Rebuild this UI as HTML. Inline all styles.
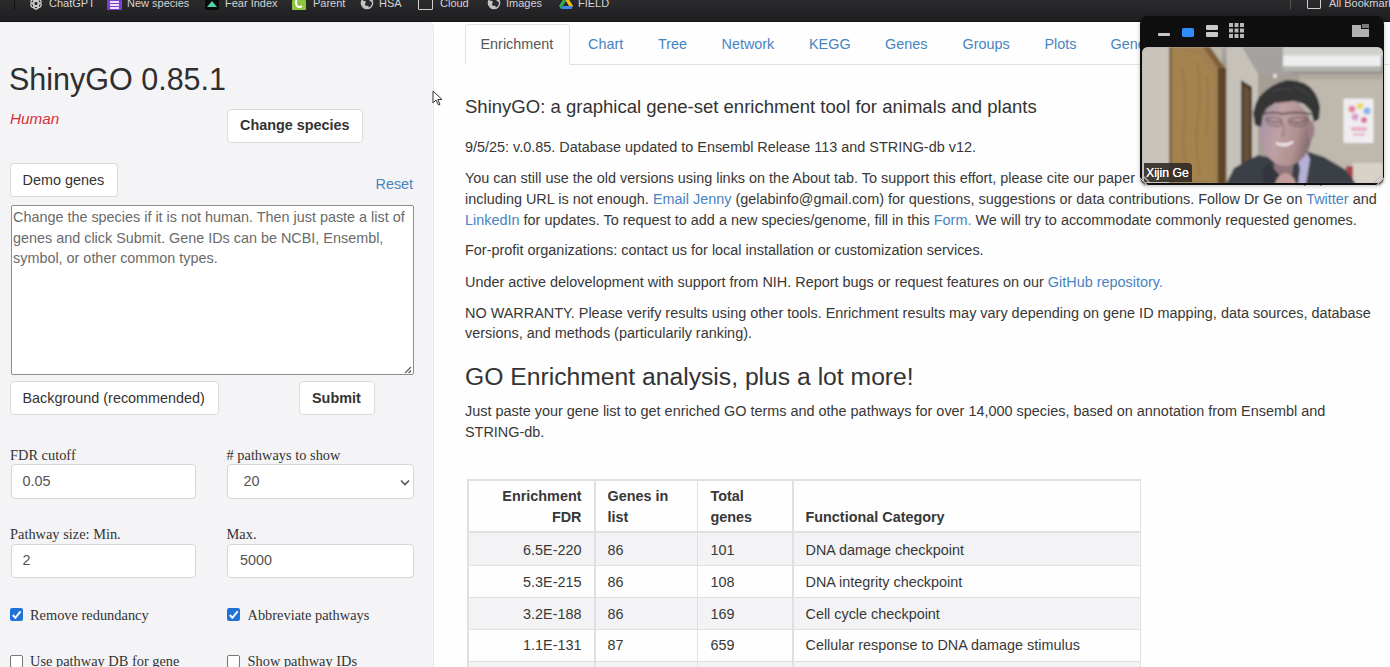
<!DOCTYPE html>
<html><head><meta charset="utf-8">
<style>
*{box-sizing:border-box;margin:0;padding:0}
html,body{width:1390px;height:667px;overflow:hidden;background:#fefefe;font-family:"Liberation Sans",sans-serif;color:#333;position:relative}
.a{position:absolute;white-space:nowrap}
#top{position:absolute;left:0;top:0;width:1390px;height:22px;background:linear-gradient(#2b2a2c,#1e1d1f);border-bottom:1px solid #121113}
#top .t{position:absolute;white-space:nowrap;top:-4px;font-size:11px;line-height:14px;color:#d4d4d4}
#side{position:absolute;left:-12px;top:22px;width:446px;height:700px;background:#f4f4f6;border:1px solid #e9e9ec;border-top-color:#f0f0f2;border-radius:5px}
.btn{position:absolute;background:#fff;border:1px solid #dcdcdc;border-radius:4px}
.inp{position:absolute;background:#fff;border:1px solid #d6d6d6;border-radius:4px}
.lbl{font-family:"Liberation Serif",serif;font-size:14.4px;color:#333;line-height:18px}
.s14{font-size:14.4px;line-height:18px}
.lnk{color:#4884c0}
.tab{position:absolute;top:0;font-size:14.4px;line-height:18px;color:#4884c0}
.line{position:absolute;left:465px;font-size:14.43px;line-height:18px;white-space:nowrap;color:#383838}
.cb{position:absolute;width:13px;height:13px;border-radius:2px}
.cell{position:absolute;font-size:14.4px;line-height:18px;white-space:nowrap;color:#383838}
.hl{position:absolute;background:#e0e0e2}
</style></head><body>

<!-- top bookmarks bar -->
<div id="top">
  <div class="a" style="left:14px;top:0;width:1px;height:10px;background:#111"></div>
  <svg class="a" style="left:29px;top:-2px" width="14" height="13" viewBox="0 0 14 13"><g fill="none" stroke="#d0d0d0" stroke-width="1.3" transform="translate(7 5.5)"><rect x="-2.2" y="-5.5" width="4.4" height="11" rx="2.2"/><rect x="-2.2" y="-5.5" width="4.4" height="11" rx="2.2" transform="rotate(60)"/><rect x="-2.2" y="-5.5" width="4.4" height="11" rx="2.2" transform="rotate(120)"/></g></svg>
  <div class="t" style="left:49px">ChatGPT</div>
  <div class="a" style="left:107px;top:0;width:15px;height:10px;background:#7b3fd6;border-radius:1px"></div>
  <div class="a" style="left:110px;top:1px;width:9px;height:1.5px;background:#e9defc;box-shadow:0 3px 0 #e9defc,0 6px 0 #e9defc"></div>
  <div class="t" style="left:127px">New species</div>
  <div class="a" style="left:205px;top:0;width:14px;height:10px;background:#0b0b0b"></div>
  <svg class="a" style="left:206px;top:0" width="12" height="9"><polygon points="6,1 11,7 1,7" fill="#4fd6a4"/></svg>
  <div class="t" style="left:225px">Fear Index</div>
  <div class="a" style="left:292px;top:0;width:14px;height:10px;background:#8cc63f;border-radius:1px"></div>
  <div class="a" style="left:295px;top:-3px;width:9px;height:11px;border:2px solid #fff;border-right-color:transparent;border-radius:50%"></div>
  <div class="t" style="left:313px">Parent</div>
  <svg class="a" style="left:360px;top:-3px" width="14" height="13"><circle cx="7" cy="6" r="5.6" fill="#2a2a2a" stroke="#c4c4c4" stroke-width="1.4"/><path d="M2 4 Q5 3 6 5 Q4 7 6 9 Q8 8 9 10 L8 12 Q3 11 1.5 7 Z M8 1 Q9 4 12 5 L12.5 3 Q11 1 8 0.5 Z" fill="#c4c4c4"/></svg>
  <div class="t" style="left:379px">HSA</div>
  <div class="a" style="left:418px;top:-2px;width:15px;height:12px;border:1.5px solid #cfcfcf;border-radius:1px"></div>
  <div class="t" style="left:440px">Cloud</div>
  <svg class="a" style="left:487px;top:-3px" width="14" height="13"><circle cx="7" cy="6" r="5.6" fill="#2a2a2a" stroke="#c4c4c4" stroke-width="1.4"/><path d="M2 4 Q5 3 6 5 Q4 7 6 9 Q8 8 9 10 L8 12 Q3 11 1.5 7 Z M8 1 Q9 4 12 5 L12.5 3 Q11 1 8 0.5 Z" fill="#c4c4c4"/></svg>
  <div class="t" style="left:506px">Images</div>
  <svg class="a" style="left:559px;top:-2px" width="14" height="12"><polygon points="5,0 9,0 14,8 12,11" fill="#fbbc04"/><polygon points="5,0 0,8 2,11 7,3" fill="#34a853"/><polygon points="2,11 12,11 14,8 4,8" fill="#4285f4"/></svg>
  <div class="t" style="left:578px">FIELD</div>
  <div class="a" style="left:1290px;top:0;width:1px;height:9px;background:#555"></div>
  <div class="a" style="left:1307px;top:-3px;width:14px;height:12px;border:1.5px solid #cfcfcf;border-radius:1px"></div>
  <div class="t" style="left:1329px">All Bookmarks</div>
</div>

<!-- sidebar -->
<div id="side"></div>
<div class="a" style="left:9px;top:61px;font-size:30.5px;line-height:36px;color:#2f2f2f">ShinyGO 0.85.1</div>
<div class="a" style="left:10px;top:110px;font-size:15.3px;line-height:18px;color:#d8303b;font-style:italic">Human</div>
<div class="btn" style="left:227px;top:108.5px;width:136px;height:34px"></div>
<div class="a" style="left:240px;top:116px;font-size:14.4px;line-height:18px;font-weight:bold;color:#333">Change species</div>
<div class="btn" style="left:10px;top:163px;width:108px;height:34px"></div>
<div class="a s14" style="left:22.5px;top:171px">Demo genes</div>
<div class="a s14 lnk" style="left:375.5px;top:174.5px">Reset</div>
<div class="a" style="left:10.5px;top:204.5px;width:403px;height:170px;background:#fff;border:1px solid #8e8e8e;border-radius:2px"></div>
<div class="a" style="left:13px;top:207px;font-size:14.4px;line-height:20.6px;color:#6a6a6a;white-space:normal;width:400px">Change the species if it is not human. Then just paste a list of<br>genes and click Submit. Gene IDs can be NCBI, Ensembl,<br>symbol, or other common types.</div>
<svg class="a" style="left:404px;top:366px" width="8" height="8"><path d="M7 1 L1 7 M7 4.5 L4.5 7" stroke="#666" stroke-width="1.4"/></svg>
<div class="btn" style="left:10px;top:380.5px;width:209px;height:34.5px"></div>
<div class="a s14" style="left:22.5px;top:389px">Background (recommended)</div>
<div class="btn" style="left:299px;top:380.5px;width:76px;height:34.5px"></div>
<div class="a" style="left:312px;top:389px;font-size:14.4px;line-height:18px;font-weight:bold;color:#333">Submit</div>

<div class="a lbl" style="left:10px;top:446px">FDR cutoff</div>
<div class="inp" style="left:10.5px;top:464px;width:185px;height:35px"></div>
<div class="a s14" style="left:22.5px;top:472px;color:#555">0.05</div>
<div class="a lbl" style="left:226.5px;top:446px"># pathways to show</div>
<div class="inp" style="left:227px;top:464px;width:186.5px;height:35px"></div>
<div class="a s14" style="left:243.5px;top:472px;color:#555">20</div>
<svg class="a" style="left:400px;top:478.7px" width="10" height="7"><path d="M1 1.5 L5 5.5 L9 1.5" stroke="#555" stroke-width="1.6" fill="none"/></svg>

<div class="a lbl" style="left:10px;top:525px">Pathway size: Min.</div>
<div class="inp" style="left:10.5px;top:544px;width:185px;height:34px"></div>
<div class="a s14" style="left:22.5px;top:551px;color:#555">2</div>
<div class="a lbl" style="left:226.5px;top:525px">Max.</div>
<div class="inp" style="left:227px;top:544px;width:186.5px;height:34px"></div>
<div class="a s14" style="left:240px;top:551px;color:#555">5000</div>

<div class="cb" style="left:10px;top:608px;background:#1f73d8"></div>
<svg class="a" style="left:10px;top:608px" width="13" height="13"><path d="M2.8 7 L5.4 9.8 L10.6 3.3" stroke="#fff" stroke-width="2" fill="none"/></svg>
<div class="a lbl" style="left:30px;top:606px">Remove redundancy</div>
<div class="cb" style="left:226.5px;top:608px;background:#1f73d8"></div>
<svg class="a" style="left:226.5px;top:608px" width="13" height="13"><path d="M2.8 7 L5.4 9.8 L10.6 3.3" stroke="#fff" stroke-width="2" fill="none"/></svg>
<div class="a lbl" style="left:247.5px;top:606px">Abbreviate pathways</div>
<div class="cb" style="left:10px;top:654.5px;background:#fff;border:1px solid #777"></div>
<div class="a lbl" style="left:30px;top:652px">Use pathway DB for gene</div>
<div class="cb" style="left:226.5px;top:654.5px;background:#fff;border:1px solid #777"></div>
<div class="a lbl" style="left:247.5px;top:652px">Show pathway IDs</div>

<!-- mouse cursor -->
<svg class="a" style="left:432px;top:90px" width="11" height="17"><path d="M1 1 L1 13 L4 10 L6.5 15 L8 14.3 L5.8 9.5 L10 9.5 Z" fill="#fff" stroke="#333" stroke-width="1"/></svg>

<!-- tabs -->
<div class="a" style="left:464.5px;top:64px;width:930px;height:1px;background:#e2e2e2"></div>
<div class="a" style="left:464.5px;top:23.5px;width:105px;height:41.5px;background:#fefefe;border:1px solid #e2e2e2;border-bottom-color:#fefefe;border-radius:4px 4px 0 0"></div>
<div class="tab" style="left:480.5px;top:35px;color:#555">Enrichment</div>
<div class="tab" style="left:588px;top:35px">Chart</div>
<div class="tab" style="left:658px;top:35px">Tree</div>
<div class="tab" style="left:721.5px;top:35px">Network</div>
<div class="tab" style="left:809px;top:35px">KEGG</div>
<div class="tab" style="left:885px;top:35px">Genes</div>
<div class="tab" style="left:962.5px;top:35px">Groups</div>
<div class="tab" style="left:1044.5px;top:35px">Plots</div>
<div class="tab" style="left:1110.5px;top:35px">Genes</div>

<!-- main text -->
<div class="a" style="left:465px;top:96px;font-size:18.55px;line-height:22px;color:#333">ShinyGO: a graphical gene-set enrichment tool for animals and plants</div>
<div class="line" style="top:138px">9/5/25: v.0.85. Database updated to Ensembl Release 113 and STRING-db v12.</div>
<div class="line" style="top:169px">You can still use the old versions using links on the About tab. To support this effort, please cite our paper <span class="lnk" style="padding-left:14px">in Bioinformatics, 2020 paper</span></div>
<div class="line" style="top:190px">including URL is not enough. <span class="lnk">Email Jenny</span> (gelabinfo@gmail.com) for questions, suggestions or data contributions. Follow Dr Ge on <span class="lnk">Twitter</span> and</div>
<div class="line" style="top:210.5px"><span class="lnk">LinkedIn</span> for updates. To request to add a new species/genome, fill in this <span class="lnk">Form.</span> We will try to accommodate commonly requested genomes.</div>
<div class="line" style="top:241px">For-profit organizations: contact us for local installation or customization services.</div>
<div class="line" style="top:272.5px">Under active delovelopment with support from NIH. Report bugs or request features on our <span class="lnk">GitHub repository.</span></div>
<div class="line" style="top:303.5px">NO WARRANTY. Please verify results using other tools. Enrichment results may vary depending on gene ID mapping, data sources, database</div>
<div class="line" style="top:324px">versions, and methods (particularily ranking).</div>
<div class="a" style="left:465px;top:363px;font-size:24.7px;line-height:28px;color:#333">GO Enrichment analysis, plus a lot more!</div>
<div class="line" style="top:402px">Just paste your gene list to get enriched GO terms and othe pathways for over 14,000 species, based on annotation from Ensembl and</div>
<div class="line" style="top:422.8px">STRING-db.</div>

<!-- table -->
<div class="a" style="left:467.5px;top:532px;width:673px;height:33px;background:#f3f3f5"></div>
<div class="a" style="left:467.5px;top:597.5px;width:673px;height:32px;background:#f3f3f5"></div>
<div class="a" style="left:467.5px;top:662px;width:673px;height:10px;background:#f3f3f5"></div>
<div class="hl" style="left:467.5px;top:479px;width:673px;height:1.5px"></div>
<div class="hl" style="left:467.5px;top:531px;width:673px;height:2px"></div>
<div class="hl" style="left:467.5px;top:564.5px;width:673px;height:1px"></div>
<div class="hl" style="left:467.5px;top:597px;width:673px;height:1px"></div>
<div class="hl" style="left:467.5px;top:629px;width:673px;height:1px"></div>
<div class="hl" style="left:467.5px;top:661px;width:673px;height:1px"></div>
<div class="hl" style="left:467px;top:479px;width:1.5px;height:200px"></div>
<div class="hl" style="left:594px;top:479px;width:1.5px;height:200px"></div>
<div class="hl" style="left:696.5px;top:479px;width:1.5px;height:200px"></div>
<div class="hl" style="left:792px;top:479px;width:1.5px;height:200px"></div>
<div class="hl" style="left:1139.5px;top:479px;width:1.5px;height:200px"></div>

<div class="cell" style="left:467.5px;width:114px;text-align:right;top:487px;font-weight:bold">Enrichment</div>
<div class="cell" style="left:467.5px;width:114px;text-align:right;top:507.5px;font-weight:bold">FDR</div>
<div class="cell" style="left:607.5px;top:487px;font-weight:bold">Genes in</div>
<div class="cell" style="left:607.5px;top:507.5px;font-weight:bold">list</div>
<div class="cell" style="left:710.5px;top:487px;font-weight:bold">Total</div>
<div class="cell" style="left:710.5px;top:507.5px;font-weight:bold">genes</div>
<div class="cell" style="left:805.5px;top:507.5px;font-weight:bold">Functional Category</div>

<div class="cell" style="left:467.5px;width:114px;text-align:right;top:540.5px">6.5E-220</div>
<div class="cell" style="left:607.5px;top:540.5px">86</div>
<div class="cell" style="left:710.5px;top:540.5px">101</div>
<div class="cell" style="left:805.5px;top:540.5px">DNA damage checkpoint</div>
<div class="cell" style="left:467.5px;width:114px;text-align:right;top:572.5px">5.3E-215</div>
<div class="cell" style="left:607.5px;top:572.5px">86</div>
<div class="cell" style="left:710.5px;top:572.5px">108</div>
<div class="cell" style="left:805.5px;top:572.5px">DNA integrity checkpoint</div>
<div class="cell" style="left:467.5px;width:114px;text-align:right;top:604.5px">3.2E-188</div>
<div class="cell" style="left:607.5px;top:604.5px">86</div>
<div class="cell" style="left:710.5px;top:604.5px">169</div>
<div class="cell" style="left:805.5px;top:604.5px">Cell cycle checkpoint</div>
<div class="cell" style="left:467.5px;width:114px;text-align:right;top:636px">1.1E-131</div>
<div class="cell" style="left:607.5px;top:636px">87</div>
<div class="cell" style="left:710.5px;top:636px">659</div>
<div class="cell" style="left:805.5px;top:636px">Cellular response to DNA damage stimulus</div>

<!-- zoom overlay -->
<div id="zoom" class="a" style="left:1140px;top:15.5px;width:243.5px;height:169px;background:#0f0f10;border-radius:8px;box-shadow:0 1px 4px rgba(0,0,0,.25)">
 <div class="a" style="left:17.5px;top:17.5px;width:12px;height:3px;background:#c8c8c8;border-radius:1px"></div>
 <div class="a" style="left:41.5px;top:12.5px;width:12.5px;height:8.5px;background:#2d8cff;border-radius:1.5px"></div>
 <div class="a" style="left:65.5px;top:9px;width:12px;height:5px;background:#c8c8c8;border-radius:1px"></div>
 <div class="a" style="left:65.5px;top:16px;width:12px;height:5px;background:#c8c8c8;border-radius:1px"></div>
 <svg class="a" style="left:88.5px;top:7.5px" width="15" height="15"><g fill="#b8b8b8"><rect x="0" y="0" width="4" height="4"/><rect x="5.5" y="0" width="4" height="4"/><rect x="11" y="0" width="4" height="4"/><rect x="0" y="5.5" width="4" height="4"/><rect x="5.5" y="5.5" width="4" height="4"/><rect x="11" y="5.5" width="4" height="4"/><rect x="0" y="11" width="4" height="4"/><rect x="5.5" y="11" width="4" height="4"/><rect x="11" y="11" width="4" height="4"/></g></svg>
 <svg class="a" style="left:211.5px;top:8.5px" width="17" height="13"><path d="M0 1 H9 V5 H17 V13 H0 Z" fill="#b0b0b0"/><rect x="10" y="0" width="7" height="4" fill="#7a7a7a"/></svg>
 <div class="a" style="left:1.5px;top:31px;width:241px;height:136.5px;border-radius:6px;overflow:hidden;background:#b7b1a8">
  <svg width="241" height="137" viewBox="0 0 241 137">
   <defs><filter id="bl"><feGaussianBlur stdDeviation="0.8"/></filter>
   <linearGradient id="ceil" x1="0" y1="0" x2="0" y2="1"><stop offset="0" stop-color="#a9a7a5"/><stop offset="1" stop-color="#8f8c88"/></linearGradient>
   <linearGradient id="face" x1="0" y1="0" x2="1" y2="0.3"><stop offset="0" stop-color="#a290a6"/><stop offset="0.45" stop-color="#bfa0a4"/><stop offset="0.8" stop-color="#b09090"/><stop offset="1" stop-color="#8a7276"/></linearGradient>
   </defs>
   <g filter="url(#bl)">
   <rect x="0" y="0" width="241" height="137" fill="#bdb6ab"/>
   <rect x="80" y="0" width="161" height="30" fill="url(#ceil)"/>
   <rect x="125" y="0" width="116" height="9" fill="#d2d0cd"/>
   <rect x="141" y="8.5" width="98" height="11" fill="#eeeef0"/>
   <rect x="141" y="19.5" width="98" height="5" fill="#b5b3b0"/>
   <polygon points="84,0 141,0 141,24 160,28 116,28" fill="#a4a29f"/>
   <rect x="0" y="0" width="28" height="137" fill="#c9c5bd"/>
   <polygon points="27,0 68,0 84.5,23 84.5,137 27,137" fill="#7f5f38"/>
   <polygon points="29.5,0 61,0 75.5,20.5 75.5,137 29.5,137" fill="#a08052"/>
   <polygon points="33,4 58,6 71,26 71,132 33,132" fill="#a8854f" opacity="0.6"/>
   <path d="M40 20 Q45 50 42 80 Q40 100 44 125 M55 15 Q60 45 56 70 Q52 95 58 128 M65 30 Q68 60 64 90" stroke="#8c6a3c" stroke-width="1.5" fill="none" opacity="0.6"/>
   <rect x="76" y="21" width="8.5" height="116" fill="#5f4528"/>
   <polygon points="84.5,0 100,0 116,27 116,110 100,137 84.5,137" fill="#c6c2ba"/>
   <polygon points="99,33 110,40 110,113 99,118" fill="#4a3826"/>
   <polygon points="101.5,38 107.5,43 107.5,112 101.5,115" fill="#6b5239"/>
   <rect x="116" y="27" width="41" height="84" fill="#a49e95"/>
   <circle cx="133" cy="29" r="2" fill="#e8e8e8"/>
   <rect x="157" y="27" width="84" height="110" fill="#bfb8ad"/>
   <rect x="157" y="27" width="84" height="6" fill="#b0aaa1"/>
   <rect x="201.5" y="51.5" width="30" height="44.5" fill="#efedf0"/>
   <circle cx="210" cy="62" r="3.5" fill="#e58aa0"/><circle cx="218" cy="59" r="3" fill="#f0d84a"/><circle cx="225" cy="64" r="3.5" fill="#8ab4e8"/><circle cx="213" cy="70" r="3.5" fill="#d8a0d0"/><circle cx="222" cy="73" r="3" fill="#e07090"/><rect x="209" y="80" width="16" height="4" fill="#e8b0c8"/><rect x="211" y="86" width="12" height="3" fill="#e8c0d0"/>
   <rect x="210" y="116" width="31" height="21" fill="#d9d2c8"/>
   <rect x="204" y="119" width="7" height="16" fill="#a8444a"/>
   <polygon points="84,137 92,121 116,108 134,112 150,114 164,104 182,110 204,123 214,137" fill="#3b3f47"/>
   <polygon points="132,112 152,112 150,128 140,132 132,124" fill="#8f737a"/>
   <polygon points="155,108 164,103 168,112 164,137 156,137 158,122" fill="#b7b0d6"/>
   <polygon points="126,116 136,126 142,137 122,137 120,124" fill="#30343b"/>
   <path d="M133 137 Q135 128 143 126 Q152 127 154 137 Z" fill="#c29c98"/>
   <ellipse cx="144" cy="86" rx="26" ry="33" fill="url(#face)"/>
   <ellipse cx="169" cy="83" rx="3.5" ry="9" fill="#9c7e88"/>
   <polygon points="113,78 111,66 114,56 117,50 123,44 130,39 137,35.5 145,33 154,34 162,36 168,40 173,46 176,52 178,60 177,72 172,75 169,64 162,57 152,54 144,55 133,56 125,61 121,68 119,80" fill="#343436"/>
   <path d="M130 45 Q140 40 150 43 M152 40 Q162 42 168 50" stroke="#5a5a5e" stroke-width="1" fill="none" opacity="0.7"/>
   <path d="M122 67 Q131 64 140 67 Q152 64 169 67" stroke="#3e343a" stroke-width="1.4" fill="none"/><path d="M124 71 Q131 69 139 72 Q141 76 138 79 Q130 80 125 76 Z M147 72 Q156 69 166 71 Q166 77 160 79 Q150 80 147 76 Z" fill="none" stroke="#5a4a52" stroke-width="0.9"/>
   <path d="M126 73 Q132 77 139 74 M148 74 Q156 78 164 73" stroke="#5a4650" stroke-width="1.2" fill="none"/>
   <path d="M141 76 Q143 86 140 90" stroke="#907078" stroke-width="1.2" fill="none"/>
   <path d="M134 96 Q142 101 151 95 Q142 99 134 96 Z" stroke="#ece6ea" stroke-width="2.2" fill="#ece6ea"/>
   </g>
  </svg>
  <div class="a" style="left:2.5px;top:116px;width:47.5px;height:19.5px;background:rgba(45,40,36,.88);border-radius:0 4px 0 0"></div>
  <div class="a" style="left:4.5px;top:119px;font-size:12.2px;line-height:14px;color:#fff;text-shadow:0 0 0.6px #fff">Xijin Ge</div>
 </div>
<svg class="a" style="left:-1px;top:159px" width="12" height="12"><path d="M1 3 L9 11 M1 6 L6 11 M4 1 L11 8" stroke="#bdbdbd" stroke-width="1.1"/></svg>
<svg class="a" style="left:233px;top:159px" width="12" height="12"><path d="M11 3 L3 11 M11 6 L6 11 M8 1 L1 8" stroke="#bdbdbd" stroke-width="1.1"/></svg>
</div>

</body></html>
